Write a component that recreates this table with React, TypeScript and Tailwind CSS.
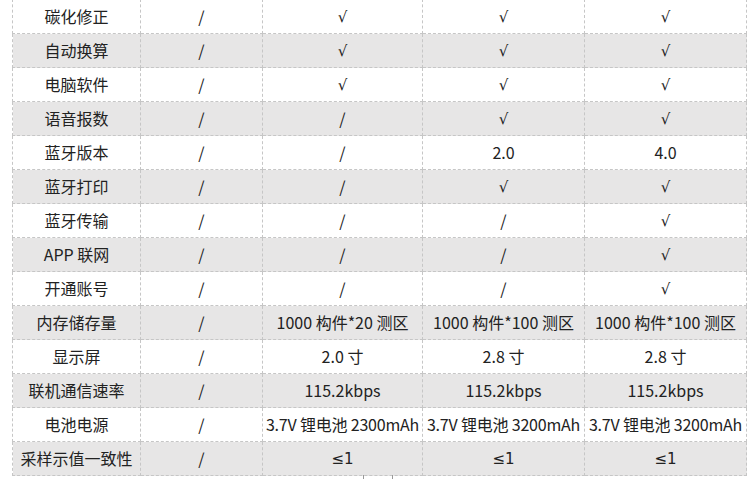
import React from "react";

const rows: string[][] = [
  ["碳化修正", "/", "√", "√", "√"],
  ["自动换算", "/", "√", "√", "√"],
  ["电脑软件", "/", "√", "√", "√"],
  ["语音报数", "/", "/", "√", "√"],
  ["蓝牙版本", "/", "/", "2.0", "4.0"],
  ["蓝牙打印", "/", "/", "√", "√"],
  ["蓝牙传输", "/", "/", "/", "√"],
  ["APP 联网", "/", "/", "/", "√"],
  ["开通账号", "/", "/", "/", "√"],
  ["内存储存量", "/", "1000 构件*20 测区", "1000 构件*100 测区", "1000 构件*100 测区"],
  ["显示屏", "/", "2.0 寸", "2.8 寸", "2.8 寸"],
  ["联机通信速率", "/", "115.2kbps", "115.2kbps", "115.2kbps"],
  ["电池电源", "/", "3.7V 锂电池 2300mAh", "3.7V 锂电池 3200mAh", "3.7V 锂电池 3200mAh"],
  ["采样示值一致性", "/", "≤1", "≤1", "≤1"],
];

const widths = ["w-[128px]", "w-[122px]", "w-[160px]", "w-[162px]", "w-[162px]"];

function Cell({ text }: { text: string }) {
  if (text === "√" || text === "≤1") {
    return <span style={{ fontFamily: '"DejaVu Sans", sans-serif' }} className="text-[15px]">{text}</span>;
  }
  if (text.startsWith("3.7V")) {
    return <span className="tracking-[-0.2px]">{text}</span>;
  }
  return <>{text}</>;
}

export default function App() {
  return (
    <div
      className="relative w-[750px] h-[495px] bg-white overflow-hidden text-[#222]"
      style={{ fontFamily: '"Noto Sans CJK SC", "Noto Sans", sans-serif' }}
    >
      <table className="ml-[12px] mt-[-1px] border-collapse table-fixed w-[734px]">
        <tbody>
          {rows.map((r, i) => (
            <tr key={i} className={i % 2 === 1 ? "bg-[#e7e6e6]" : "bg-white"}>
              {r.map((c, j) => (
                <td
                  key={j}
                  className={`${widths[j]} h-[34px] p-0 pb-[2px] text-center align-middle whitespace-nowrap border border-dashed border-[#c6c6c6] text-[16px] leading-[20px]`}
                >
                  <Cell text={c} />
                </td>
              ))}
            </tr>
          ))}
        </tbody>
      </table>
      <div className="absolute left-[363px] top-[475px] w-px h-[4px] bg-[#999]" />
      <div className="absolute left-[392px] top-[475px] w-px h-[4px] bg-[#999]" />
    </div>
  );
}
